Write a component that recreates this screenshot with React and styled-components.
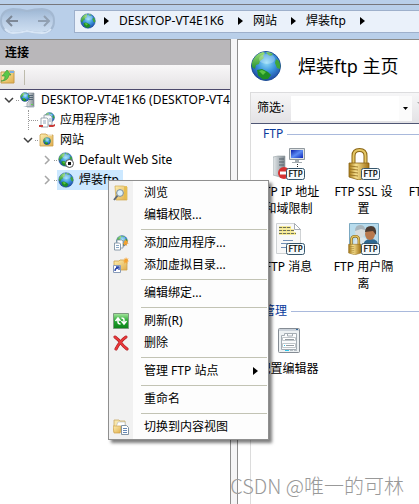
import React, { useState } from "react";
import styled, { createGlobalStyle, css } from "styled-components";

const GlobalStyle = createGlobalStyle`
  * {
    box-sizing: border-box;
  }

  body {
    margin: 0;
    background: #fff;
    color: #000;
    font-family: "Noto Sans", "Noto Sans CJK SC", sans-serif;
    font-size: 12px;
    line-height: 20px;
  }

  button,
  input {
    font: inherit;
    color: inherit;
  }

  svg {
    display: block;
    flex: none;
  }
`;

const Window = styled.div`
  position: relative;
  display: flex;
  flex-direction: column;
  min-height: 100vh;
  overflow: hidden;
  background: #b9cfe9;
`;

const PlainButton = styled.button`
  display: flex;
  align-items: center;
  padding: 0;
  border: 0;
  background: none;
  white-space: nowrap;
`;

/* ---------- address bar ---------- */

const TopBar = styled.header`
  display: flex;
  align-items: center;
  height: 35px;
  margin-top: 4px;
  padding-bottom: 2px;
  border-top: 1px solid #77777c;
`;

const NavButtons = styled.div`
  position: relative;
  display: flex;
  flex: none;
  width: 56px;
  height: 28px;
  margin-right: 18px;
`;

const NavShape = styled.svg`
  position: absolute;
  inset: 0;
`;

const NavButton = styled(PlainButton)`
  position: relative;
  flex: 1;
  justify-content: ${({ $end }) => ($end ? "flex-end" : "flex-start")};
  padding: 0 5px;
`;

const Address = styled.nav`
  display: flex;
  flex: 1;
  align-items: center;
  min-width: 0;
  height: 23px;
  padding-left: 5px;
  overflow: hidden;
  border: 1px solid #9eb0cb;
  border-right: 0;
  background: #eaf1fa;
`;

const Crumb = styled.a`
  color: inherit;
  text-decoration: none;
  white-space: nowrap;
`;

const CrumbArrow = styled.svg`
  margin: 0 10px 0 ${({ $first }) => ($first ? 8 : 14)}px;
`;

/* ---------- panels ---------- */

const Body = styled.div`
  display: flex;
  flex: 1;
  background: #f5f5f6;
`;

const Connections = styled.aside`
  flex: 0 0 231px;
  min-width: 0;
  overflow: hidden;
  border-top: 1px solid #8b8b88;
  border-right: 1px solid #8e8e8e;
  background: #fff;
`;

const PanelTitle = styled.h2`
  margin: 0;
  padding: 3px 5px 2px;
  background: #b9b7ba;
  font-size: 12px;
  line-height: 20px;
`;

const PanelTools = styled.div`
  display: flex;
  align-items: center;
  gap: 8px;
  height: 25px;
  border-bottom: 1px solid #4c4a6c;
  background: linear-gradient(#f8f7f8, #e4e2e4);
`;

const ToolDivider = styled.span`
  width: 1px;
  height: 15px;
  background: #bdbbac;
`;

const Tree = styled.ul`
  margin: 0;
  padding: 0;
  list-style: none;
`;

const TreeRow = styled.li`
  display: flex;
  align-items: center;
  height: 20px;
  padding-left: ${({ $level }) => 2 + $level * 19}px;
  white-space: nowrap;
`;

const Twisty = styled(PlainButton)`
  justify-content: center;
  flex: none;
  width: 14px;
  height: 20px;
`;

const Dots = styled.span`
  flex: none;
  width: ${({ $wide }) => ($wide ? 10 : 3)}px;
  height: 20px;
  margin-left: ${({ $wide }) => ($wide ? -7 : 0)}px;
  background: repeating-linear-gradient(90deg, #999 0 1px, transparent 1px 2px)
    center / 100% 1px no-repeat;
  ${({ $wide }) =>
    $wide &&
    css`
      border-left: 1px dotted #999;
    `}
`;

const TreeLabel = styled.span`
  display: flex;
  align-items: center;
  gap: 5px;
  height: 20px;
  padding: 0 4px 0 1px;
  background: ${({ $selected }) => ($selected ? "#cce8ff" : "none")};
`;

const Main = styled.main`
  flex: 1;
  min-width: 0;
  margin-left: 6px;
  padding-left: 12px;
  overflow: hidden;
  border-top: 1px solid #8b8b88;
  border-left: 1px solid #8e8e8e;
  background: #fff;
`;

const PageTitle = styled.h1`
  display: flex;
  align-items: center;
  gap: 16px;
  height: 52px;
  margin: 0;
  font-size: 18px;
  font-weight: 400;
  line-height: 24px;
  white-space: nowrap;
`;

const FeatureView = styled.section`
  min-height: calc(100vh - 92px);
  border-left: 1px solid #dcdcdc;
`;

const FilterBar = styled.form`
  display: flex;
  align-items: center;
  height: 32px;
  padding-left: 6px;
  border-top: 1px solid #dcdcde;
  border-bottom: 1px solid #4f5674;
  background: linear-gradient(#f6f6f7, #e3e2e5);
`;

const FilterLabel = styled.label`
  flex: none;
  width: 34px;
`;

const FilterBox = styled.div`
  display: flex;
  flex: none;
  width: 121px;
  height: 25px;
  background: #fff;
`;

const FilterInput = styled.input`
  flex: 1;
  min-width: 0;
  padding: 0 4px;
  border: 0;
  background: none;
  outline: none;
`;

const DropButton = styled(PlainButton)`
  justify-content: center;
  width: 13px;
  background: #fbfbfb;
`;

const GoMark = styled.svg`
  margin: 0 0 6px 5px;
`;

const GroupTitle = styled.h3`
  display: flex;
  align-items: center;
  gap: 4px;
  margin: 0;
  padding-left: 12px;
  color: #0a3a9c;
  font-size: 12px;
  font-weight: 400;
  line-height: 20px;

  &::after {
    content: "";
    flex: 1;
    height: 1px;
    background: #a9b9dc;
  }
`;

const Features = styled.div`
  display: grid;
  grid-template-columns: repeat(3, 75px);
  grid-auto-rows: 75px;
  padding-top: 4px;
  margin-bottom: 3px;
`;

const Feature = styled(PlainButton)`
  flex-direction: column;
  gap: 3px;
  line-height: 17px;
  text-align: center;
  white-space: pre;
`;

/* ---------- context menu ---------- */

const Menu = styled.div`
  position: absolute;
  top: 180px;
  left: 108px;
  width: 161px;
  padding: 1px;
  border: 1px solid #8f8f8f;
  background: linear-gradient(90deg, #f1f1f1 24px, #fdfdfd 24px);
  box-shadow: 3px 3px 3px rgba(0, 0, 0, 0.5);
`;

const MenuItem = styled(PlainButton)`
  width: 100%;
  height: 22px;
  padding: 0 9px 0 3px;

  &:hover {
    background: #cfe5fa;
  }
`;

const MenuIcon = styled.span`
  flex: none;
  width: 31px;
`;

const MenuText = styled.span`
  flex: 1;
  text-align: left;
`;

const MenuLine = styled.hr`
  height: 1px;
  margin: 3px 0 2px 31px;
  border: 0;
  background: #c2c3b4;
`;

const Watermark = styled.div`
  position: absolute;
  right: 15px;
  bottom: 4px;
  color: #999;
  font-family: "Noto Sans CJK SC", sans-serif;
  font-size: 20px;
  font-weight: 300;
  line-height: 28px;
  white-space: nowrap;
`;

/* ---------- drawings ---------- */

function GlobeArt() {
  return (
    <>
      <circle cx="16" cy="16" r="14.500" fill="url(#sea)" stroke="#1d4f96" strokeWidth="1" />
      <path d="M3 10Q7 3 13 2l2 1-2 3 1 2-4 3-1 3-3 1-1 4-3-2Q1 13 3 10Z" fill="url(#land)" />
      <path d="M16 2q4 0 7 2l-2 2-3-1Z" fill="url(#land)" />
      <path d="M26 9l3 2q2 4 1 8l-3-1-2-5Z" fill="#3fa53a" />
      <path d="M7 20l5-1 6 3 3 3-3 4-5 .5-5-4Z" fill="#1f8f24" />
      <path d="M9 21l3-1 4 2-3 3Z" fill="#5cc444" />
      <ellipse cx="17" cy="9" rx="8" ry="5" fill="#fff" opacity=".25" />
    </>
  );
}

function Globe({ size = 16 }) {
  return (
    <svg width={size} height={size} viewBox="0 0 32 32">
      <GlobeArt />
    </svg>
  );
}

function Defs() {
  return (
    <svg width="0" height="0" style={{ position: "absolute" }}>
      <defs>
        <radialGradient id="sea" cx=".52" cy=".38" r=".65">
          <stop offset="0" stopColor="#8fdcf8" />
          <stop offset=".5" stopColor="#3a93dc" />
          <stop offset="1" stopColor="#1b3f9c" />
        </radialGradient>
        <linearGradient id="land" x2="0" y2="1">
          <stop offset="0" stopColor="#9bdf76" />
          <stop offset="1" stopColor="#269030" />
        </linearGradient>
        <linearGradient id="folder" x2="1" y2="1">
          <stop offset="0" stopColor="#fdeeb0" />
          <stop offset="1" stopColor="#e0ae4c" />
        </linearGradient>
        <linearGradient id="gold" x2="1" y2="0">
          <stop offset="0" stopColor="#a87914" />
          <stop offset=".35" stopColor="#f8e290" />
          <stop offset="1" stopColor="#a06f12" />
        </linearGradient>
        <linearGradient id="steel" x2="1" y2="0">
          <stop offset="0" stopColor="#e6eaec" />
          <stop offset="1" stopColor="#7d878e" />
        </linearGradient>
        <linearGradient id="screen" x2="1" y2="1">
          <stop offset="0" stopColor="#0a1eaa" />
          <stop offset=".5" stopColor="#5c8cf4" />
          <stop offset="1" stopColor="#0a24b8" />
        </linearGradient>
        <linearGradient id="refresh" x2="0" y2="1">
          <stop offset="0" stopColor="#a9e8a0" />
          <stop offset=".5" stopColor="#23a530" />
          <stop offset="1" stopColor="#0c8119" />
        </linearGradient>
        <linearGradient id="nav" x2="0" y2="1">
          <stop offset="0" stopColor="#9db6d3" />
          <stop offset=".4" stopColor="#b5cae3" />
          <stop offset="1" stopColor="#d0e0f2" />
        </linearGradient>
      </defs>
    </svg>
  );
}

const NavArrow = ({ forward }) => (
  <svg width="14" height="14" viewBox="0 0 14 14">
    <path
      d={forward ? "M1 7h11M7 2l5 5-5 5" : "M13 7H2M7 2L2 7l5 5"}
      fill="none"
      stroke={forward ? "#91a0b2" : "#7d8897"}
      strokeWidth="2"
    />
  </svg>
);

const Arrow = ({ first }) => (
  <CrumbArrow $first={first} width="5" height="8" viewBox="0 0 5 8">
    <path d="M0 0l5 4-5 4Z" />
  </CrumbArrow>
);

const UpFolder = () => (
  <svg width="16" height="16" viewBox="0 0 16 16">
    <path d="M1 3h5l1-1h7v12H1Z" fill="url(#folder)" stroke="#c79a48" />
    <path d="M10 2h4v2h-4Z" fill="#79aee0" />
    <path d="M1 12q4 0 4-5H2l5-6 4 5H9q-1 6-8 6Z" fill="#5bc848" stroke="#38923a" strokeWidth=".6" />
  </svg>
);

const Server = () => (
  <svg width="16" height="16" viewBox="0 0 16 16">
    <path d="M8 1h6v14H7v-4l2-2Z" fill="url(#steel)" stroke="#7c8790" strokeWidth=".6" />
    <path d="M9 3.500h4M9 5.500h4M9 7.500h4" stroke="#526574" />
    <path d="M11 12h2v1h-2Z" fill="#60d44e" />
    <path d="M3 15l4-1h7v1Z" fill="#9babb5" />
    <svg x="0" y="0" width="10" height="10" viewBox="0 0 32 32">
      <GlobeArt />
    </svg>
  </svg>
);

const Pools = () => (
  <svg width="16" height="16" viewBox="0 0 16 16">
    <svg x="5" y="0" width="11" height="11" viewBox="0 0 32 32">
      <GlobeArt />
    </svg>
    <path d="M5 3h6l2 2v8H5Z" fill="#f7f9fb" stroke="#8795a1" strokeWidth=".8" />
    <path d="M2 6h6l1 1v8H2Z" fill="#fff" stroke="#8795a1" strokeWidth=".8" />
    <path d="M4 9h3M4 11h3M10 7h2M10 9h2" stroke="#7691ab" strokeWidth=".8" />
    <path d="M0 13h4v2H0Zm10 0h4l2-1v2l-2 1h-4Z" fill="#c93b38" />
  </svg>
);

const SitesFolder = () => (
  <svg width="16" height="16" viewBox="0 0 16 16">
    <path d="M1 3l1-1h5l1 1h6v11H1Z" fill="url(#folder)" stroke="#ca9d49" strokeWidth=".8" />
    <path d="M9 3h4" stroke="#fff" />
    <svg x="4" y="5" width="8" height="8" viewBox="0 0 32 32">
      <GlobeArt />
    </svg>
  </svg>
);

const StoppedSite = () => (
  <svg width="16" height="16" viewBox="0 0 16 16">
    <svg width="15" height="15" viewBox="0 0 32 32">
      <GlobeArt />
    </svg>
    <circle cx="11.500" cy="11.500" r="4" fill="#fff" stroke="#555" />
    <path d="M10 10h3v3h-3Z" fill="#111" />
  </svg>
);

const BrowseIcon = () => (
  <svg width="16" height="16" viewBox="0 0 16 16">
    <path d="M2 1h8l4 1v13H3Z" fill="url(#folder)" stroke="#d0a94f" strokeWidth=".7" />
    <path d="M11 2l3-1v14l-3-2Z" fill="#e6bd50" />
    <path d="M1 15l4-5" stroke="#5d6873" strokeWidth="2" />
    <circle cx="7" cy="8" r="3.400" fill="#ddf1fb" stroke="#7c8c98" />
  </svg>
);

const Spark = () => (
  <path d="M12 0l1 2.600L15.500 1.500 14 4l2 1.500-2.500.5.500 3-2-2-2.500 2 .5-3L8 5.500 10.500 4 9 1.500l2.200 1Z" fill="#f5a12e" />
);

const AddAppIcon = () => (
  <svg width="16" height="16" viewBox="0 0 16 16">
    <svg x="3" y="0" width="12" height="12" viewBox="0 0 32 32">
      <GlobeArt />
    </svg>
    <path d="M4 5h5l1 1v7H4Z" fill="#fff" stroke="#8294a5" strokeWidth=".8" />
    <path d="M1.500 8h5l1 1v6h-6Z" fill="#fff" stroke="#71879a" strokeWidth=".8" />
    <path d="M3 10.500h3M3 12.500h3" stroke="#6a91b6" strokeWidth=".8" />
    <g transform="translate(3 4) scale(.8)">
      <Spark />
    </g>
  </svg>
);

const AddDirIcon = () => (
  <svg width="16" height="16" viewBox="0 0 16 16">
    <path d="M1 4h5l1-1h7v10H1Z" fill="url(#folder)" stroke="#cfa24b" strokeWidth=".8" />
    <path d="M.5 8.500h7v7h-7Z" fill="#fff" stroke="#889bb8" />
    <path d="M2 14q0-3 3-3M3 10h3v3" fill="none" stroke="#2541a5" strokeWidth="1.300" />
    <g transform="translate(4 0) scale(.75)">
      <Spark />
    </g>
  </svg>
);

const RefreshIcon = () => (
  <svg width="16" height="16" viewBox="0 0 16 16">
    <path d="M.5.5h15v15H.5Z" fill="url(#refresh)" stroke="#7d9a80" />
    <path d="M5 5v4q0 2 2.500 2M2.500 8L5 5l2.500 3M11 11V7q0-2-2.500-2M8.500 8l2.500 3 2.500-3" fill="none" stroke="#fff" strokeWidth="1.500" />
  </svg>
);

const DeleteIcon = () => (
  <svg width="16" height="16" viewBox="0 0 16 16">
    <path d="M2 2q4 3 6 6t6 6M13 2Q7 6 3 14" fill="none" stroke="#a91b20" strokeWidth="3" strokeLinecap="round" />
    <path d="M2 2q4 3 6 6t6 6M13 2Q7 6 3 14" fill="none" stroke="#e8383a" strokeWidth="2" strokeLinecap="round" />
  </svg>
);

const ContentIcon = () => (
  <svg width="16" height="16" viewBox="0 0 16 16">
    <path d="M1 1h5l1 1h5v11H1Z" fill="#f8e6aa" stroke="#c9aa64" strokeWidth=".8" />
    <path d="M5 3h7v5H3Z" fill="#fff" stroke="#b1b8bc" strokeWidth=".6" />
    <path d="M0 7h8l-1 7H1Z" fill="url(#folder)" stroke="#cfa24b" strokeWidth=".7" />
    <path d="M8.500 6.500h5l2 2v7h-7Z" fill="#fff" stroke="#8294a5" />
    <path d="M10 9.500h4M10 11.500h4M10 13.500h4" stroke="#6588b7" />
  </svg>
);

/* badge in the lower right corner of the FTP icons */
const FtpBadge = () => (
  <g>
    <rect x="13.500" y="20.500" width="18" height="11" rx="2" fill="#f5fafc" stroke="#36566c" />
    <text x="22.500" y="29" textAnchor="middle" fontSize="8" fontFamily="DejaVu Sans, sans-serif" fill="#000" stroke="#000" strokeWidth=".2">
      FTP
    </text>
  </g>
);

const FeatureSvg = ({ children }) => (
  <svg width="32" height="32" viewBox="0 0 32 32">
    {children}
  </svg>
);

const IpIcon = () => (
  <FeatureSvg>
    <path d="M0 9l5-1h7v19l-5 2-7-2Z" fill="url(#steel)" stroke="#949da2" strokeWidth=".6" />
    <path d="M6 11h5M6 14h5M6 17h5" stroke="#54606a" />
    <path d="M9 22h1v2H9Z" fill="#51c74c" />
    <path d="M16.500.5h15v11h-15Z" fill="#dfe3e5" stroke="#91999f" />
    <path d="M18 2h12v8H18Z" fill="url(#screen)" />
    <path d="M22 12h4v2h3v1H19v-1h3Z" fill="#a5adb2" />
    <path d="M24.500 16v4" stroke="#222" strokeDasharray="1 1" />
    <circle cx="11" cy="25" r="6" fill="#d73232" />
    <path d="M7 23.500h8v3H7Z" fill="#fff" />
    <FtpBadge />
  </FeatureSvg>
);

const Padlock = () => (
  <>
    <path d="M5.500 16V8q0-6 6-6t6 6v8" fill="none" stroke="#8a6515" strokeWidth="4" />
    <path d="M5.500 16V8q0-6 6-6t6 6v8" fill="none" stroke="#e5c765" strokeWidth="2" />
    <path d="M1 15h20v14l-10 3-10-3Z" fill="url(#gold)" stroke="#8c6516" strokeWidth=".8" />
    <path d="M2 18l8 1M2 21l8 1M2 24l8 1M2 27l8 1" stroke="#8d681c" strokeWidth=".8" />
  </>
);

const SslIcon = () => (
  <FeatureSvg>
    <Padlock />
    <FtpBadge />
  </FeatureSvg>
);

const MessageIcon = () => (
  <FeatureSvg>
    <path d="M3.500.5h18l6 6v24h-24Z" fill="#f8f8f8" stroke="#cfd2d4" />
    <path d="M21.500.5v6h6Z" fill="#fff" stroke="#a7adb3" />
    <path d="M6 4.500h12M6 7.500h15M6 10.500h17" stroke="#f0dc4a" strokeWidth="2" />
    <path d="M6 4.500h12M6 7.500h15M6 10.500h17" stroke="#6d6f5c" strokeDasharray="3 1" />
    <path d="M10 17.500h10M8 20.500h9M8 24.500h5" stroke="#718fb5" />
    <FtpBadge />
  </FeatureSvg>
);

const UsersIcon = () => (
  <FeatureSvg>
    <path d="M1.500.5h29v23h-29Z" fill="#b8dced" stroke="#7ba8c1" />
    <path d="M6 21q0-7 7-7t7 7v3H6Z" fill="#dbe7ed" />
    <ellipse cx="12" cy="9" rx="5" ry="6" fill="#d7dcdd" />
    <path d="M7 8q0-6 5-6t5 5l-4-1Z" fill="#a8b5bc" />
    <path d="M15 24q0-8 8-8t7 8Z" fill="#2e678f" />
    <ellipse cx="22" cy="11" rx="5" ry="6" fill="#b8794e" />
    <path d="M17 9q0-6 6-6t5 9l-3-4Z" fill="#4c3b31" />
    <g transform="translate(0 12) scale(.62)">
      <Padlock />
    </g>
    <FtpBadge />
  </FeatureSvg>
);

const EditorIcon = () => (
  <FeatureSvg>
    <rect x="5.500" y="3.500" width="21" height="24" rx="1" fill="#edf1f3" stroke="#858c94" />
    <path d="M6 4h20v2H6Z" fill="#cbd2da" />
    <path d="M23 4h2v1h-2Z" fill="#356998" />
    <path d="M8.500 24.500v-14h3v-2h12v16Z" fill="#fafbfc" stroke="#a4acb3" />
    <path d="M14.500 8v3h5V8" fill="none" stroke="#a4acb3" />
    <path d="M9.500 12.500h13v3h-13ZM9.500 18.500h13v4h-13Z" fill="#fff" stroke="#c0c6ca" />
    <path d="M13 20.500h8M12 14.500h9" stroke="#969da3" />
    <path d="M11 20.500h1M12 25.500h4" stroke="#2ec4ea" />
    <path d="M17 25.500h3M21 25.500h3" stroke="#b7bec4" />
  </FeatureSvg>
);

const ftpFeatures = [
  { label: "FTP IP 地址\n和域限制", Icon: IpIcon },
  { label: "FTP SSL 设\n置", Icon: SslIcon },
  { label: "FTP 防火墙\n支持", Icon: SslIcon },
  { label: "FTP 消息\n ", Icon: MessageIcon },
  { label: "FTP 用户隔\n离", Icon: UsersIcon },
];

const treeRows = [
  { label: "DESKTOP-VT4E1K6 (DESKTOP-VT4", level: 0, open: true, Icon: Server },
  { label: "应用程序池", level: 1, leaf: true, Icon: Pools },
  { label: "网站", level: 1, open: true, Icon: SitesFolder },
  { label: "Default Web Site", level: 2, Icon: StoppedSite },
  { label: "焊装ftp", level: 2, selected: true, Icon: Globe },
];

const menuGroups = [
  [
    { label: "浏览", Icon: BrowseIcon },
    { label: "编辑权限..." },
  ],
  [
    { label: "添加应用程序...", Icon: AddAppIcon },
    { label: "添加虚拟目录...", Icon: AddDirIcon },
  ],
  [{ label: "编辑绑定..." }],
  [
    { label: "刷新(R)", Icon: RefreshIcon },
    { label: "删除", Icon: DeleteIcon },
  ],
  [{ label: "管理 FTP 站点", sub: true }],
  [{ label: "重命名" }],
  [{ label: "切换到内容视图", Icon: ContentIcon }],
];

function ConnectionTree() {
  return (
    <Tree>
      {treeRows.map(({ label, level, open, leaf, selected, Icon }) => (
        <TreeRow key={label} $level={level}>
          <Twisty as={leaf ? "span" : "button"} aria-label={leaf ? undefined : label}>
            {!leaf && (
              <svg width="10" height="10" viewBox="0 0 10 10">
                <path
                  d={open ? "M1 3l4 4 4-4" : "M3 1l4 4-4 4"}
                  fill="none"
                  stroke={open ? "#404040" : "#a6a6a6"}
                  strokeWidth="1.500"
                />
              </svg>
            )}
          </Twisty>
          <Dots $wide={leaf} />
          <TreeLabel $selected={selected}>
            <Icon />
            {label}
          </TreeLabel>
        </TreeRow>
      ))}
    </Tree>
  );
}

function ContextMenu() {
  return (
    <Menu role="menu">
      {menuGroups.map((group, idx) => (
        <React.Fragment key={idx}>
          {idx > 0 && <MenuLine />}
          {group.map(({ label, Icon, sub }) => (
            <MenuItem key={label} role="menuitem">
              <MenuIcon>{Icon && <Icon />}</MenuIcon>
              <MenuText>{label}</MenuText>
              {sub && (
                <svg width="5" height="8" viewBox="0 0 5 8">
                  <path d="M0 0l5 4-5 4Z" />
                </svg>
              )}
            </MenuItem>
          ))}
        </React.Fragment>
      ))}
    </Menu>
  );
}

function App() {
  const [filter, setFilter] = useState("");

  return (
    <Window>
      <GlobalStyle />
      <Defs />
      <TopBar>
        <NavButtons>
          <NavShape width="56" height="28" viewBox="0 0 56 28">
            <path
              d="M13 2Q20 2 27 4 35 2 42 2 54 3 54 14T42 26Q35 26 27 24 20 26 13 26 1 25 1 14T13 2Z"
              fill="url(#nav)"
              stroke="#a3b8d1"
              strokeWidth="2"
            />
            <path d="M5 22q4 4 8 4 7 0 14-2 8 2 15 2 6 0 9-4" fill="none" stroke="#d8e6f6" strokeWidth="2" />
          </NavShape>
          <NavButton aria-label="后退">
            <NavArrow />
          </NavButton>
          <NavButton $end aria-label="前进">
            <NavArrow forward />
          </NavButton>
        </NavButtons>
        <Address>
          <Globe />
          <Arrow first />
          <Crumb href="#server">DESKTOP-VT4E1K6</Crumb>
          <Arrow />
          <Crumb href="#sites">网站</Crumb>
          <Arrow />
          <Crumb href="#site">焊装ftp</Crumb>
          <Arrow />
        </Address>
      </TopBar>

      <Body>
        <Connections>
          <PanelTitle>连接</PanelTitle>
          <PanelTools>
            <PlainButton aria-label="向上">
              <UpFolder />
            </PlainButton>
            <ToolDivider />
          </PanelTools>
          <ConnectionTree />
        </Connections>

        <Main>
          <PageTitle>
            <Globe size={32} />
            焊装ftp 主页
          </PageTitle>
          <FeatureView>
            <FilterBar onSubmit={(e) => e.preventDefault()}>
              <FilterLabel htmlFor="filter">筛选:</FilterLabel>
              <FilterBox>
                <FilterInput id="filter" value={filter} onChange={(e) => setFilter(e.target.value)} />
                <DropButton type="button" aria-label="筛选历史">
                  <svg width="5" height="3" viewBox="0 0 5 3">
                    <path d="M0 0h5L2.500 3Z" />
                  </svg>
                </DropButton>
              </FilterBox>
              <GoMark width="10" height="8" viewBox="0 0 10 8">
                <path d="M0 1h10L6 5v3H4V5Z" fill="#aaa" />
              </GoMark>
            </FilterBar>
            <GroupTitle>FTP</GroupTitle>
            <Features>
              {ftpFeatures.map(({ label, Icon }) => (
                <Feature key={label}>
                  <Icon />
                  {label}
                </Feature>
              ))}
            </Features>
            <GroupTitle>管理</GroupTitle>
            <Features>
              <Feature>
                <EditorIcon />
                {"配置编辑器\n "}
              </Feature>
            </Features>
          </FeatureView>
        </Main>
      </Body>

      <ContextMenu />
      <Watermark>CSDN @唯一的可林</Watermark>
    </Window>
  );
}

export default App;
